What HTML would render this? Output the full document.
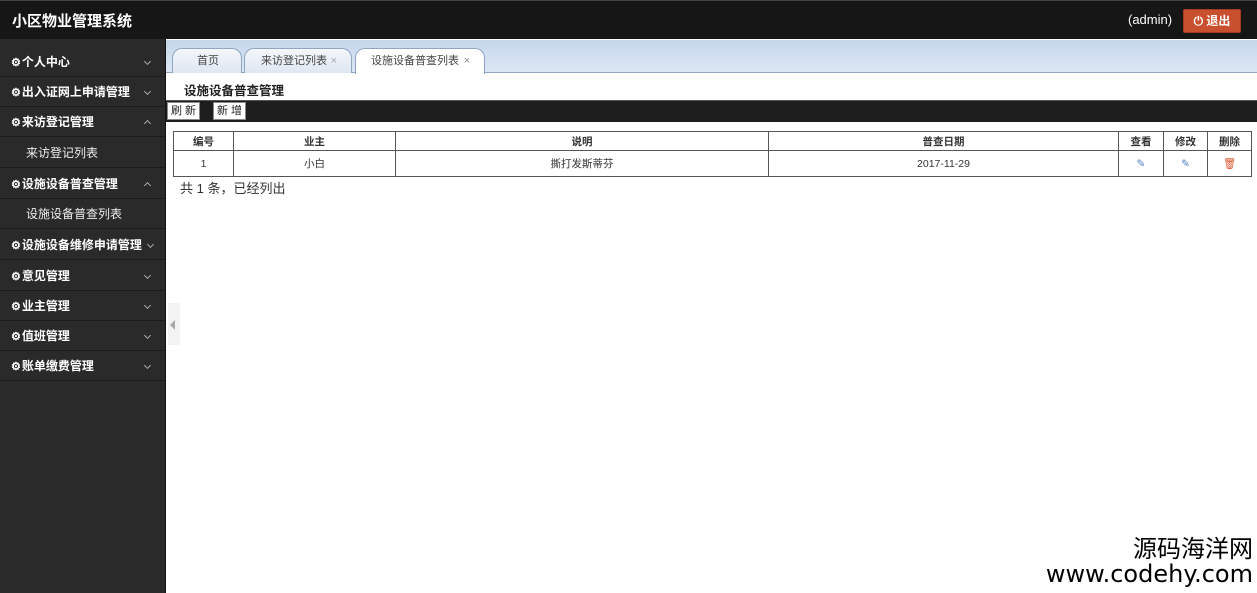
<!DOCTYPE html>
<html><head><meta charset="utf-8"><style>
*{margin:0;padding:0;box-sizing:border-box}
body{width:1257px;height:593px;overflow:hidden;background:#fff;font-family:"Liberation Sans","Noto Sans CJK SC",sans-serif;position:relative}
.top{position:absolute;left:0;top:0;width:1257px;height:39px;background:#161616;border-top:1px solid #444}
.logo{position:absolute;left:12px;top:9px;color:#fff;font-size:15px;font-weight:bold}
.admin{position:absolute;left:1128px;top:11px;color:#fff;font-size:13px}
.out{position:absolute;left:1183px;top:8px;width:58px;height:24px;background:#c9502f;border:1px solid #a33c20;border-radius:2px;color:#fff;font-size:12px;font-weight:bold;text-align:center;line-height:22px}
.side{position:absolute;left:0;top:39px;width:166px;height:554px;background:#2a2a2a;border-right:1px solid #111}
.it{position:absolute;left:0;width:165px;height:30px;border-bottom:1px solid #1c1c1c;color:#fff;font-size:12px;font-weight:bold;line-height:30px;padding-left:11px}
.it .g{font-size:11px;margin-right:1px}
.it .a{position:absolute;right:15px;top:12px;width:5px;height:5px;border-right:1.5px solid #aaa;border-bottom:1.5px solid #aaa;transform:rotate(45deg)}
.it .a.u{top:14px;transform:rotate(-135deg)}
.sub{position:absolute;left:0;width:165px;height:30px;color:#eee;font-size:12px;line-height:30px;padding-left:26px;background:#2a2a2a;border-bottom:1px solid #1c1c1c}
.tabs{position:absolute;left:166px;top:40px;width:1091px;height:33px;background:linear-gradient(#c5d6ea,#dce7f4);border-bottom:1px solid #8fa5c0}
.tab{position:absolute;top:8px;height:25px;border:1px solid #8fa5c0;border-bottom:none;border-radius:10px 10px 0 0;background:linear-gradient(#f4f7fb,#dfe7f1);font-size:11px;color:#444;line-height:24px;padding-left:18px}
.tab.on{background:#fff;height:26px}
.x{position:absolute;right:14px;color:#aaa;font-size:11px}
.title{position:absolute;left:184px;top:80px;font-size:12.5px;font-weight:bold;color:#222}
.bar{position:absolute;left:166px;top:100px;width:1091px;height:22px;background:#1e1e1e;border-top:1px solid #555}
.btn{position:absolute;top:102px;height:18px;background:#fff;border:1px solid #888;font-size:11px;line-height:16px;padding:0 3px;color:#222}
table{position:absolute;left:173px;top:131px;border-collapse:collapse;font-size:10.5px;color:#333}
td{border:1px solid #555;text-align:center}
tr.h td{height:19px;font-weight:bold}
tr.d td{height:26px}
.cnt{position:absolute;left:180px;top:178px;font-size:13px;color:#333}
.wm{position:absolute;right:4px;top:537px;text-align:right;color:#000;font-size:24px;line-height:25px;font-family:"DejaVu Sans","Noto Sans CJK SC",sans-serif}
</style></head><body>
<div class="top"><div class="logo">小区物业管理系统</div><div class="admin">(admin)</div><div class="out">⏻ 退出</div></div>
<div class="side">
<div class="it" style="top:8px"><span class="g">⚙</span>个人中心<span class="a"></span></div>
<div class="it" style="top:38px"><span class="g">⚙</span>出入证网上申请管理<span class="a"></span></div>
<div class="it" style="top:68px"><span class="g">⚙</span>来访登记管理<span class="a u"></span></div>
<div class="sub" style="top:99px">来访登记列表</div>
<div class="it" style="top:130px"><span class="g">⚙</span>设施设备普查管理<span class="a u"></span></div>
<div class="sub" style="top:160px">设施设备普查列表</div>
<div class="it" style="top:191px"><span class="g">⚙</span>设施设备维修申请管理<span class="a" style="right:12px"></span></div>
<div class="it" style="top:222px"><span class="g">⚙</span>意见管理<span class="a"></span></div>
<div class="it" style="top:252px"><span class="g">⚙</span>业主管理<span class="a"></span></div>
<div class="it" style="top:282px"><span class="g">⚙</span>值班管理<span class="a"></span></div>
<div class="it" style="top:312px"><span class="g">⚙</span>账单缴费管理<span class="a"></span></div>
</div>
<div style="position:absolute;left:168px;top:303px;width:12px;height:42px;background:#f3f3f3"></div>
<div style="position:absolute;left:170px;top:320px;width:0;height:0;border-right:5px solid #aaa;border-top:5px solid transparent;border-bottom:5px solid transparent"></div>
<div class="tabs">
<div class="tab" style="left:6px;width:70px;padding-left:24px">首页</div>
<div class="tab" style="left:78px;width:108px;padding-left:16px">来访登记列表<span class="x">×</span></div>
<div class="tab on" style="left:189px;width:130px;padding-left:15px">设施设备普查列表<span class="x" style="color:#888">×</span></div>
</div>
<div class="title">设施设备普查管理</div>
<div class="bar"></div>
<div class="btn" style="left:167px">刷 新</div>
<div class="btn" style="left:213px">新 增</div>
<table>
<tr class="h"><td style="width:60px">编号</td><td style="width:162px">业主</td><td style="width:373px">说明</td><td style="width:350px">普查日期</td><td style="width:45px">查看</td><td style="width:44px">修改</td><td style="width:44px">删除</td></tr>
<tr class="d"><td>1</td><td>小白</td><td>撕打发斯蒂芬</td><td>2017-11-29</td><td style="color:#4a7fc0">✎</td><td style="color:#4a7fc0">✎</td><td style="color:#d9532c">🗑</td></tr>
</table>
<div class="cnt">共 1 条，已经列出</div>
<div class="wm">源码海洋网<br>www.codehy.com</div>
</body></html>
